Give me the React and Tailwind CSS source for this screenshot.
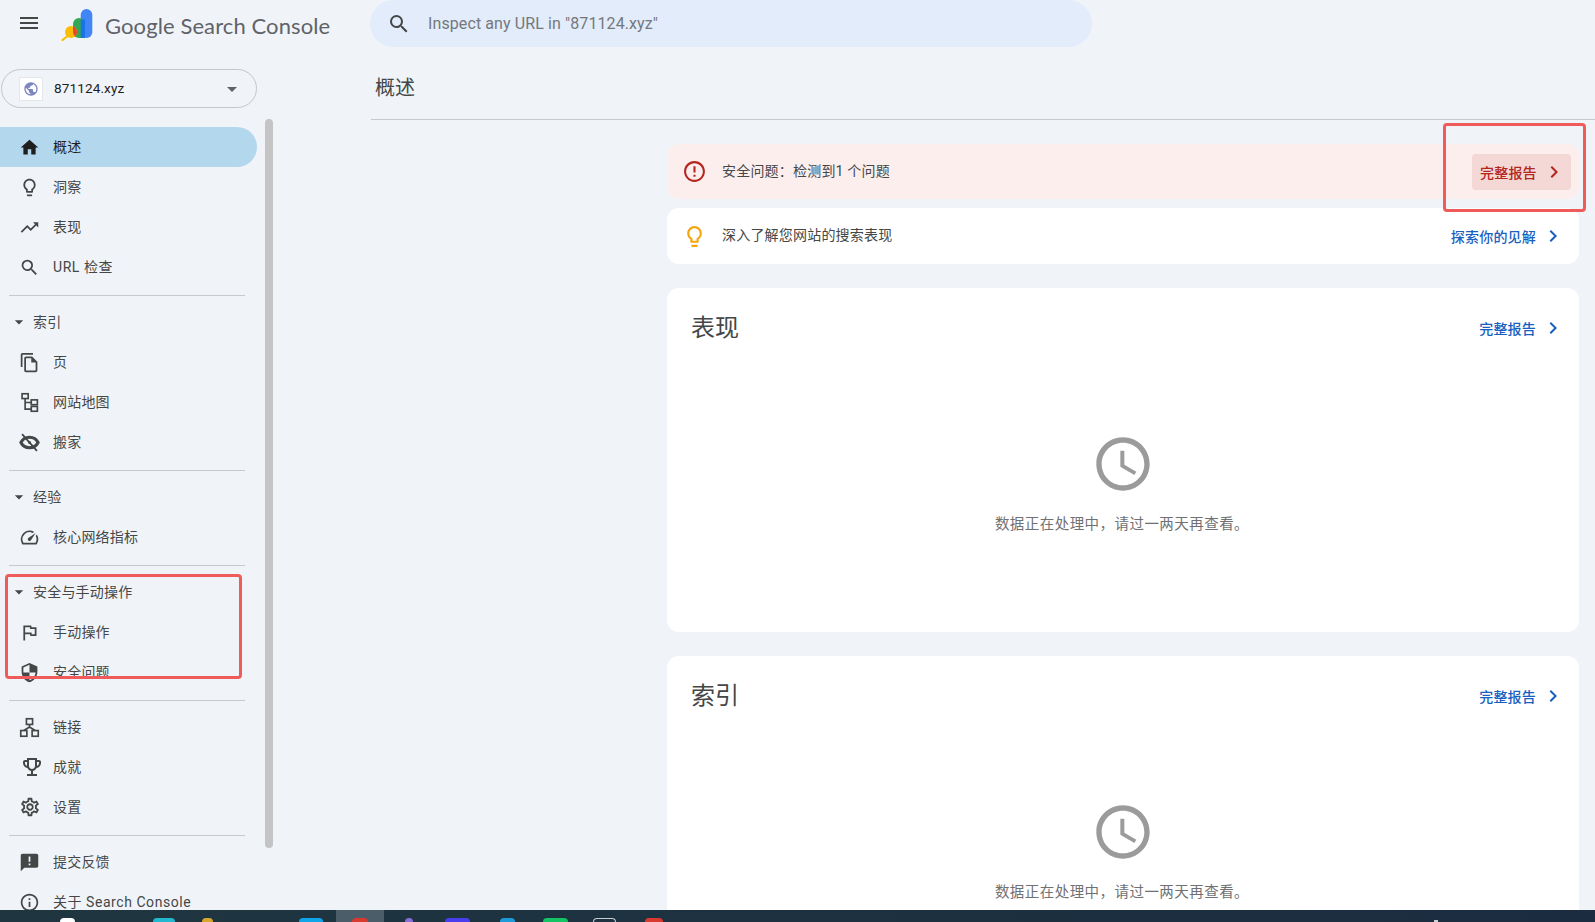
import React from 'react'
import {
  MdMenu, MdSearch, MdArrowDropDown, MdHome, MdOutlineLightbulb, MdTrendingUp,
  MdOutlineSpeed, MdOutlineFlag, MdSecurity,
  MdOutlineEmojiEvents, MdOutlineSettings, MdAnnouncement, MdInfoOutline,
  MdOutlineSchedule, MdErrorOutline, MdChevronRight, MdOutlineFileCopy, MdPublic,
} from 'react-icons/md'

function SitemapIcon() {
  return (
    <svg width="21" height="21" viewBox="0 0 24 24" fill="none" stroke="currentColor" strokeWidth="1.9">
      <rect x="3.5" y="2" width="7" height="5.5" />
      <rect x="14" y="9" width="7" height="5.5" />
      <rect x="14" y="16.5" width="7" height="5.5" />
      <path d="M7 7.5v12h7M7 12h7" />
    </svg>
  )
}

function LinksIcon() {
  return (
    <svg width="21" height="21" viewBox="0 0 24 24" fill="none" stroke="currentColor" strokeWidth="1.9">
      <rect x="8.5" y="2" width="7" height="6.5" />
      <rect x="2" y="15.5" width="7" height="6.5" />
      <rect x="15" y="15.5" width="7" height="6.5" />
      <path d="M12 8.5v3.5M5.5 15.5L12 11.5l6.5 4" />
    </svg>
  )
}

function EyeOffIcon() {
  return (
    <svg width="21" height="21" viewBox="0 0 24 24" fill="none" stroke="currentColor">
      <path d="M2.2 12C4.2 8 8 6 12 6S19.8 8 21.8 12C19.8 16 16 18 12 18S4.2 16 2.2 12z" strokeWidth="3.6" />
      <circle cx="12" cy="12" r="1.6" fill="currentColor" strokeWidth="0" />
      <path d="M3.5 2.5L20.5 21.5" strokeWidth="2.1" />
    </svg>
  )
}

function Logo() {
  return (
    <svg width="36" height="36" viewBox="0 0 36 36">
      <defs>
        <clipPath id="logo-green">
          <path d="M13 17a6 6 0 0 1 12 0v14H19a6 6 0 0 1-6-6z" />
        </clipPath>
      </defs>
      <rect x="20.7" y="2" width="11.6" height="29" rx="5.8" fill="#4285f4" />
      <path d="M13 17a6 6 0 0 1 12 0v14H19a6 6 0 0 1-6-6z" fill="#34a853" />
      <path d="M20.7 12.5h4.3V31h-4.3z" fill="#1a73e8" />
      <path d="M2.5 33l5-4" stroke="#fbbc04" strokeWidth="2.2" strokeLinecap="round" />
      <circle cx="11" cy="25" r="6" fill="#fbbc04" />
      <circle cx="11" cy="25" r="6" fill="#ea4335" clipPath="url(#logo-green)" />
    </svg>
  )
}

function NavRow({ icon, label, active, wide }) {
  return (
    <div className={`flex h-10 w-[257px] items-center rounded-r-full pl-[17px] ${active ? 'bg-[#b3d7ed] text-[#1f1f1f]' : 'text-[#444746]'}`}>
      <span className="flex w-9 shrink-0 items-center pl-[1.5px]">{icon}</span>
      <span className={`text-sm ${wide ? 'tracking-[0.55px]' : 'tracking-[0.2px]'}`}>{label}</span>
    </div>
  )
}

function SectionHead({ label }) {
  return (
    <div className="flex h-10 items-center pl-[9px] text-[#444746]">
      <MdArrowDropDown size={20} className="-mr-[2px] w-[20px] shrink-0 text-[#444746]" />
      <span className="ml-[6px] text-sm tracking-[0.2px]">{label}</span>
    </div>
  )
}

function Divider() {
  return <div className="mb-[6px] ml-[9px] mt-2 h-px w-[236px] bg-[#c7c9cb]" />
}

function FullReport({ label = '完整报告', tone = 'text-[#1a5fbf]' }) {
  return (
    <div className={`flex items-center text-sm font-medium tracking-[0.2px] ${tone}`}>
      <span className="pt-[2px]">{label}</span>
      <MdChevronRight size={24} className="ml-[5px]" />
    </div>
  )
}

function DataCard({ title }) {
  return (
    <section className="mb-6 h-[344px] shrink-0 rounded-xl bg-white">
      <div className="flex items-center justify-between pl-6 pr-[14px] pt-[22px]">
        <h2 className="text-[24px] font-normal leading-[36px] text-[#444746]">{title}</h2>
        <FullReport />
      </div>
      <div className="flex flex-col items-center pt-[86px]">
        <MdOutlineSchedule size={64} className="text-[#9b9b9b]" />
        <p className="mt-[18px] pr-[2px] text-[14.5px] tracking-[0.45px] text-[#6f7173]">数据正在处理中，请过一两天再查看。</p>
      </div>
    </section>
  )
}

const taskbarIcons = [
  { cls: 'ml-[60px] w-[15px] rounded-t-full bg-white' },
  { cls: 'ml-[78px] w-[22px] rounded-t-full bg-[#22b8cf]' },
  { cls: 'ml-[27px] w-[11px] rounded-t-sm bg-[#d8a72c]' },
  { cls: 'ml-[86px] w-[24px] rounded-t-md bg-[#0ea5e9]' },
]

const taskbarRest = [
  { cls: 'ml-[21px] w-[8px] rounded-t-full bg-[#8b6fd8]' },
  { cls: 'ml-[32px] w-[25px] rounded-t-md bg-[#4a3df0]' },
  { cls: 'ml-[30px] w-[15px] rounded-t-full bg-[#1d9bd8]' },
  { cls: 'ml-[28px] w-[25px] rounded-t-lg bg-[#12c463]' },
  { cls: 'ml-[25px] w-[23px] rounded-t-md border border-b-0 border-[#c9ced1]' },
  { cls: 'ml-[29px] w-[18px] rounded-t-full bg-[#d93a30]' },
]

export default function App() {
  return (
    <div className="relative flex h-[922px] w-[1595px] flex-col overflow-hidden bg-[#f0f4f9] font-['Roboto','Noto_Sans_CJK_SC',sans-serif]">
      <div className="h-[910px] shrink-0 overflow-hidden">
        {/* Top bar */}
        <header className="flex h-[60px] items-start">
          <MdMenu size={24} className="ml-[17px] mt-[11px] text-[#444746]" />
          <div className="ml-[19px] mt-[7px]"><Logo /></div>
          <span className="ml-[9px] mt-[9px] font-['Lato',sans-serif] text-[22px] leading-[34px] tracking-[0.1px] text-[#5f6368]">Google Search Console</span>
          <div className="absolute left-[370px] top-0 flex h-[47px] w-[722px] items-center rounded-[24px] bg-[#e2ecfb] pl-[17px]">
            <MdSearch size={24} className="text-[#444746]" />
            <span className="ml-[17px] text-base tracking-[0.1px] text-[#75787b]">Inspect any URL in "871124.xyz"</span>
          </div>
        </header>

        <div className="flex">
          {/* Sidebar */}
          <aside className="flex w-[371px] shrink-0 items-start">
            <div className="w-[265px] shrink-0 pt-[9px]">
              <div className="ml-[1px] flex h-[39px] w-[256px] items-center rounded-full border border-[#c4c7c5] pl-[17px]">
                <span className="flex h-[24px] w-[24px] items-center justify-center border border-[#e3e6ea] bg-white">
                  <MdPublic size={16} className="text-[#7c86c0]" />
                </span>
                <span className="ml-[11px] text-[13.6px] tracking-[0.1px] text-[#1f1f1f]">871124.xyz</span>
                <MdArrowDropDown size={24} className="ml-auto mr-[12px] text-[#5f6368]" />
              </div>
              <nav className="mt-[19px]">
                <NavRow active icon={<MdHome size={21} />} label="概述" />
                <NavRow icon={<MdOutlineLightbulb size={21} />} label="洞察" />
                <NavRow icon={<MdTrendingUp size={21} />} label="表现" />
                <NavRow wide icon={<MdSearch size={21} />} label="URL 检查" />
                <Divider />
                <SectionHead label="索引" />
                <NavRow icon={<MdOutlineFileCopy size={21} />} label="页" />
                <NavRow icon={<SitemapIcon />} label="网站地图" />
                <NavRow icon={<EyeOffIcon />} label="搬家" />
                <Divider />
                <SectionHead label="经验" />
                <NavRow icon={<MdOutlineSpeed size={21} />} label="核心网络指标" />
                <Divider />
                <SectionHead label="安全与手动操作" />
                <NavRow icon={<MdOutlineFlag size={21} />} label="手动操作" />
                <NavRow icon={<MdSecurity size={21} />} label="安全问题" />
                <Divider />
                <NavRow icon={<LinksIcon />} label="链接" />
                <NavRow icon={<MdOutlineEmojiEvents size={24} className="ml-[1px]" />} label="成就" />
                <NavRow icon={<MdOutlineSettings size={22} />} label="设置" />
                <Divider />
                <NavRow icon={<MdAnnouncement size={21} />} label="提交反馈" />
                <NavRow wide icon={<MdInfoOutline size={21} />} label="关于 Search Console" />
              </nav>
            </div>
            <div className="mt-[59px] h-[729px] w-2 rounded-full bg-[#c4c4c4]" />
          </aside>

          {/* Main */}
          <main className="min-w-0 flex-1">
            <div className="flex h-[60px] items-center border-b border-[#c7c9cb] pb-[4px] pl-[4px]">
              <h1 className="text-[20px] font-normal text-[#444746]">概述</h1>
            </div>
            <div className="flex flex-col pl-[296px] pr-[16px] pt-[24px]">
              <div className="flex h-[55px] items-center rounded-xl bg-[#fdeeee] pl-[15px] pr-[8px]">
                <MdErrorOutline size={25} className="text-[#b3261e]" />
                <span className="ml-[15px] pb-[2px] text-sm tracking-[0.2px] text-[#444746]">安全问题：检测到1 个问题</span>
                <div className="ml-auto flex h-[36px] w-[99px] items-center rounded bg-[#f3d8d5] pl-[8px]">
                  <FullReport tone="text-[#b3261e]" />
                </div>
              </div>
              <div className="mb-6 mt-[9px] flex h-[56px] items-center justify-between rounded-xl bg-white pl-[15px] pr-[14px]">
                <div className="flex items-center">
                  <MdOutlineLightbulb size={25} className="text-[#f2a60c]" />
                  <span className="ml-[15px] pb-[2px] text-sm tracking-[0.2px] text-[#444746]">深入了解您网站的搜索表现</span>
                </div>
                <FullReport label="探索你的见解" />
              </div>
              <DataCard title="表现" />
              <DataCard title="索引" />
            </div>
          </main>
        </div>
      </div>

      {/* Taskbar */}
      <footer className="flex h-[12px] shrink-0 items-end bg-gradient-to-r from-[#1f3640] to-[#1b2c40]">
        {taskbarIcons.map((t, i) => (
          <span key={i} className={`h-[4px] ${t.cls}`} />
        ))}
        <span className="ml-[13px] flex h-[12px] w-[48px] items-end justify-center bg-[#4a5d68]">
          <span className="h-[4px] w-[16px] rounded-t-full bg-[#d93a30]" />
        </span>
        {taskbarRest.map((t, i) => (
          <span key={i} className={`h-[4px] ${t.cls}`} />
        ))}
        <span className="ml-[771px] h-[2px] w-[4px] bg-[#c9ced1]" />
      </footer>

      {/* Red annotation boxes */}
      <div className="absolute left-[5px] top-[574px] h-[105px] w-[237px] rounded-sm border-[3px] border-[#ef5b5b]" />
      <div className="absolute left-[1443px] top-[123px] h-[89px] w-[143px] rounded-sm border-[3px] border-[#ef5b5b]" />
    </div>
  )
}
